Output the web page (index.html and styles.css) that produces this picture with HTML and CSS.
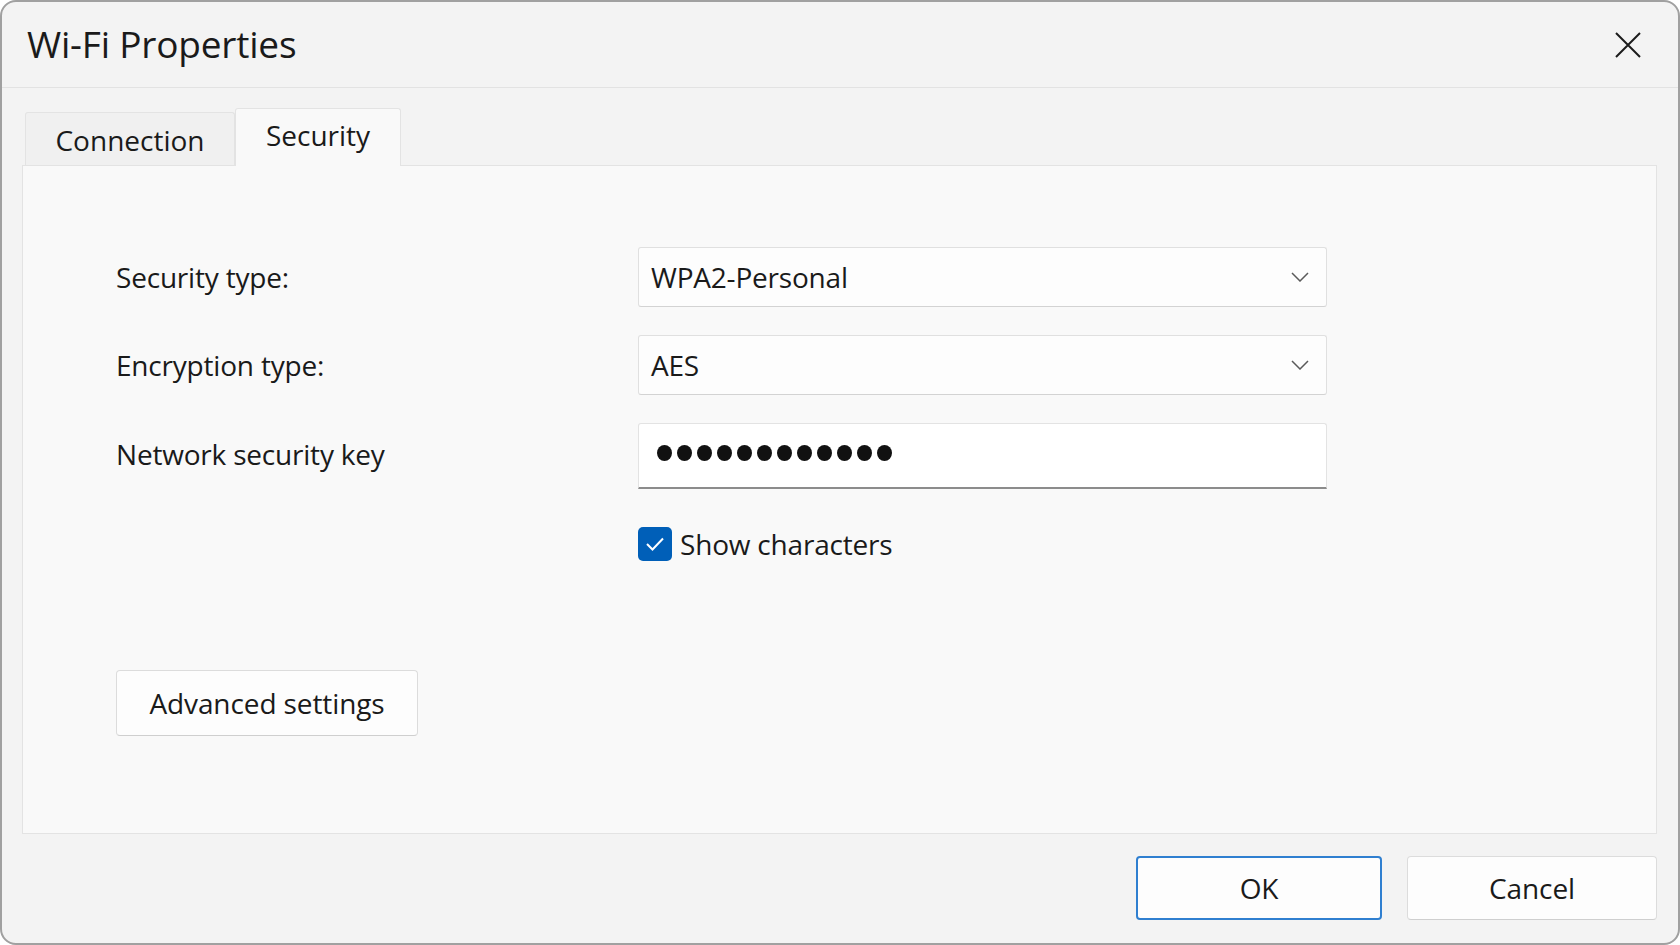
FILE: index.html
```html
<!DOCTYPE html>
<html lang="en">
<head>
<meta charset="utf-8">
<title>Wi-Fi Properties</title>
<link rel="stylesheet" href="styles.css">
</head>
<body>
<div class="window">
  <div class="titlebar">
    <div class="title">Wi-Fi Properties</div>
    <button class="close" aria-label="Close">
      <svg width="28" height="28" viewBox="0 0 28 28"><path d="M2 2 L26 26 M26 2 L2 26" stroke="#1b1b1b" stroke-width="2" fill="none"/></svg>
    </button>
  </div>
  <div class="tabs">
    <div class="tab">Connection</div>
    <div class="tab active">Security</div>
  </div>
  <div class="panel">
    <div class="form">
      <div class="label">Security type:</div>
      <div class="select"><span>WPA2-Personal</span>
        <svg class="chev" width="18" height="10" viewBox="0 0 18 10"><path d="M1 1 L9 9 L17 1" stroke="#5a5a5a" stroke-width="1.5" fill="none"/></svg>
      </div>
      <div class="label">Encryption type:</div>
      <div class="select"><span>AES</span>
        <svg class="chev" width="18" height="10" viewBox="0 0 18 10"><path d="M1 1 L9 9 L17 1" stroke="#5a5a5a" stroke-width="1.5" fill="none"/></svg>
      </div>
      <div class="label key">Network security key</div>
      <div class="input">
        <span class="dot"></span><span class="dot"></span><span class="dot"></span><span class="dot"></span><span class="dot"></span><span class="dot"></span><span class="dot"></span><span class="dot"></span><span class="dot"></span><span class="dot"></span><span class="dot"></span><span class="dot"></span>
      </div>
      <div></div>
      <label class="check">
        <span class="box"><svg width="22" height="18" viewBox="0 0 22 18"><path d="M3 9 L8.5 14.5 L19 3.5" stroke="#fff" stroke-width="2" fill="none"/></svg></span>
        <span>Show characters</span>
      </label>
    </div>
    <button class="btn advanced">Advanced settings</button>
  </div>
  <div class="footer">
    <button class="btn ok">OK</button>
    <button class="btn cancel">Cancel</button>
  </div>
</div>
</body>
</html>
```
FILE: styles.css
```css
* { box-sizing: border-box; }
html, body { margin: 0; padding: 0; background: #ffffff; }
body {
  font-family: "Open Sans", "Noto Sans", sans-serif;
  color: #1a1a1a;
}
.window {
  width: 1680px;
  height: 945px;
  border: 2px solid #a0a0a0;
  border-radius: 16px;
  background: #f3f3f3;
  display: flex;
  flex-direction: column;
  overflow: hidden;
}
.titlebar {
  height: 86px;
  flex: none;
  display: flex;
  align-items: center;
  justify-content: space-between;
  padding: 0 36px 0 25px;
  border-bottom: 1px solid #e2e2e2;
}
.title {
  font-size: 37px;
  letter-spacing: -0.2px;
  margin-top: -2px;
}
.close {
  border: 0;
  background: transparent;
  padding: 0;
  width: 28px;
  height: 28px;
  display: flex;
}
.tabs {
  height: 77px;
  flex: none;
  display: flex;
  align-items: flex-end;
  padding-left: 23px;
  position: relative;
  z-index: 1;
}
.tab {
  height: 53px;
  width: 210px;
  display: flex;
  align-items: center;
  justify-content: center;
  font-size: 28px;
  background: #f0f0f0;
  border: 1px solid #e3e3e3;
  border-bottom: 0;
  border-radius: 3px 3px 0 0;
  padding-top: 2px;
}
.tab.active {
  height: 58px;
  width: 166px;
  background: #f9f9f9;
  margin-bottom: -1px;
  padding-top: 0;
  padding-bottom: 6px;
}
.panel {
  margin: 0 21px 0 20px;
  height: 669px;
  flex: none;
  background: #f9f9f9;
  border: 1px solid #e3e3e3;
  padding: 81px 0 0 93px;
}
.form {
  display: grid;
  grid-template-columns: 522px 689px;
  grid-template-rows: 60px 60px 66px 34px;
  row-gap: 28px;
  align-items: center;
}
.label {
  font-size: 28px;
  letter-spacing: -0.2px;
}
.label.key { margin-top: -5px; }
.select {
  height: 60px;
  background: #fdfdfd;
  border: 1px solid #e0e0e0;
  border-bottom-color: #d3d3d3;
  border-radius: 3px;
  display: flex;
  align-items: center;
  justify-content: space-between;
  padding: 0 17px 0 12px;
  font-size: 28px;
  letter-spacing: -0.2px;
}
.input {
  height: 66px;
  background: #ffffff;
  border: 1px solid #e3e3e3;
  border-bottom: 2px solid #8c8c8c;
  border-radius: 3px 3px 0 0;
  display: flex;
  align-items: center;
  gap: 5px;
  padding: 0 0 6px 18px;
}
.dot {
  width: 15px;
  height: 16px;
  border-radius: 50%;
  background: #111;
  flex: none;
}
.check {
  display: flex;
  align-items: center;
  gap: 8px;
  font-size: 28px;
  letter-spacing: -0.2px;
  margin-top: 20px;
}
.box {
  width: 34px;
  height: 34px;
  border-radius: 5px;
  background: #005fb8;
  display: flex;
  align-items: center;
  justify-content: center;
  flex: none;
}
.btn {
  font-family: "Open Sans", "Noto Sans", sans-serif;
  font-size: 28px;
  letter-spacing: -0.1px;
  color: #1a1a1a;
  background: #fdfdfd;
  border: 1px solid #dcdcdc;
  border-bottom-color: #cfcfcf;
  border-radius: 4px;
  padding: 0;
  display: flex;
  align-items: center;
  justify-content: center;
}
.advanced {
  margin-top: 119px;
  width: 302px;
  height: 66px;
}
.footer {
  flex: 1;
  display: flex;
  justify-content: flex-end;
  gap: 25px;
  padding: 22px 21px 0 0;
}
.ok {
  width: 246px;
  height: 64px;
  border: 2px solid #2f7fd0;
}
.cancel {
  width: 250px;
  height: 64px;
}
```
